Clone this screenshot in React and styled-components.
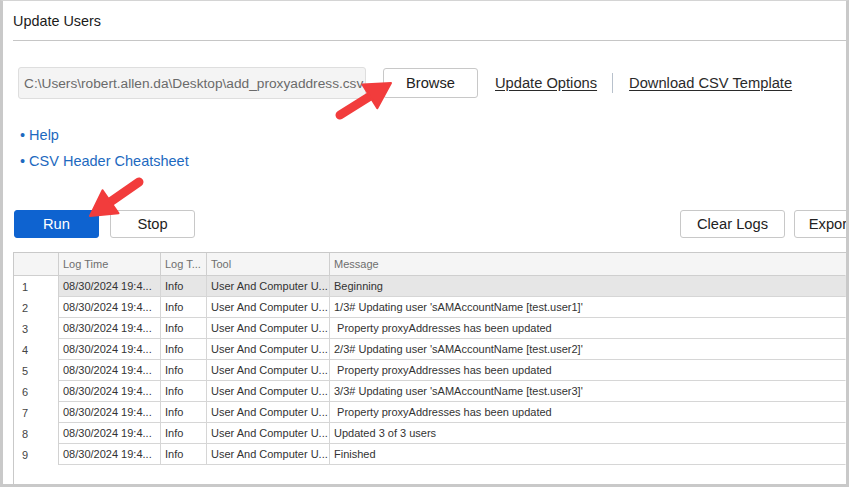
import React from "react";
import styled, { createGlobalStyle } from "styled-components";

const Global = createGlobalStyle`
  html, body { margin: 0; padding: 0; background: #fff; }
  body { font-family: "Liberation Sans", Arial, sans-serif; }
  * { box-sizing: border-box; }
`;

const Frame = styled.div`
  position: relative;
  width: 849px;
  height: 487px;
  border-left: 3px solid #c9c9c9;
  border-top: 1px solid #d4d4d4;
  border-right: 3px solid #c9c9c9;
  border-bottom: 3px solid #c9c9c9;
  padding-left: 10px;
  display: flex;
  flex-direction: column;
  overflow: hidden;
  background: #fff;
`;

const Title = styled.div`
  height: 40px;
  flex: none;
  display: flex;
  align-items: center;
  border-bottom: 1px solid #c6c6c6;
  font-size: 14.4px;
  color: #1a1a1a;
`;

const FileRow = styled.div`
  margin-top: 26px;
  padding-left: 5px;
  display: flex;
  align-items: center;
  flex: none;
`;

const PathBox = styled.div`
  width: 348px;
  height: 32px;
  background: #f4f4f4;
  border: 1px solid #dedede;
  border-radius: 3px;
  padding-left: 5px;
  display: flex;
  align-items: center;
  font-size: 13.7px;
  color: #6a6a6a;
  white-space: nowrap;
  overflow: hidden;
`;

const Button = styled.button`
  height: 28px;
  width: ${(p) => p.$w || 85}px;
  border-radius: 3px;
  border: 1px solid ${(p) => (p.$primary ? "#0e63d0" : "#c8c8c8")};
  background: ${(p) => (p.$primary ? "#0e63d0" : "#fff")};
  color: ${(p) => (p.$primary ? "#fff" : "#222")};
  font-family: "Liberation Sans", Arial, sans-serif;
  font-size: 14.7px;
  padding: 0;
  flex: none;
  cursor: pointer;
`;

const BrowseButton = styled(Button)`
  margin-left: 17px;
  height: 30px;
`;

const LinkText = styled.a`
  font-size: 14.7px;
  color: #2a2a2a;
  text-decoration: underline;
  text-underline-offset: 2px;
  margin-left: ${(p) => p.$ml || 0}px;
  cursor: pointer;
`;

const Divider = styled.span`
  width: 1px;
  height: 20px;
  background: #b8c1cc;
  margin-left: 15px;
`;

const HelpList = styled.div`
  margin-top: 23px;
  padding-left: 7px;
  display: flex;
  flex-direction: column;
  flex: none;
`;

const HelpItem = styled.a`
  line-height: 26px;
  font-size: 14.5px;
  color: #1d69c0;
  cursor: pointer;
`;

const ActionRow = styled.div`
  margin-top: 36px;
  margin-right: -20px;
  padding-left: 1px;
  display: flex;
  align-items: center;
  gap: 11px;
  flex: none;
`;

const RightGroup = styled.div`
  margin-left: auto;
  display: flex;
  gap: 9px;
`;

const Table = styled.div`
  margin-top: 14px;
  flex: 1;
  border-top: 1px solid #c9c9c9;
  border-left: 1px solid #c9c9c9;
  display: grid;
  grid-template-columns: 45px 102px 46px 123px 1fr;
  grid-auto-rows: 21px;
  grid-template-rows: 23px;
  align-content: start;
  font-size: 11px;
  color: #333;
`;

const HeadCell = styled.div`
  background: #f5f5f5;
  border-bottom: 1px solid #cfcfcf;
  border-right: 1px solid ${(p) => (p.$last ? "transparent" : "#cfcfcf")};
  color: #6e6e6e;
  display: flex;
  align-items: center;
  padding-left: 4px;
  white-space: nowrap;
  overflow: hidden;
`;

const NumCell = styled.div`
  border-right: 1px solid #d2d2d2;
  display: flex;
  align-items: center;
  padding-left: 8px;
  color: #444;
`;

const Cell = styled.div`
  background: ${(p) => (p.$sel ? "#e6e6e6" : "#fff")};
  border-bottom: 1px solid #d6d6d6;
  border-right: 1px solid ${(p) => (p.$last ? "transparent" : "#d6d6d6")};
  display: flex;
  align-items: center;
  padding-left: 4px;
  white-space: pre;
  overflow: hidden;
`;

const Overlay = styled.svg`
  position: absolute;
  left: -3px;
  top: -1px;
  width: 849px;
  height: 487px;
  pointer-events: none;
`;

const messages = [
  "Beginning",
  "1/3# Updating user 'sAMAccountName [test.user1]'",
  " Property proxyAddresses has been updated",
  "2/3# Updating user 'sAMAccountName [test.user2]'",
  " Property proxyAddresses has been updated",
  "3/3# Updating user 'sAMAccountName [test.user3]'",
  " Property proxyAddresses has been updated",
  "Updated 3 of 3 users",
  "Finished",
];

function Arrow({ tail, tip }) {
  const dx = tip[0] - tail[0];
  const dy = tip[1] - tail[1];
  const len = Math.hypot(dx, dy);
  const ux = dx / len;
  const uy = dy / len;
  const nx = -uy;
  const ny = ux;
  const hl = 25;
  const hw = 14;
  const bx = tip[0] - hl * ux;
  const by = tip[1] - hl * uy;
  const pts = [
    [tip[0], tip[1]],
    [bx + hw * nx, by + hw * ny],
    [bx - hw * nx, by - hw * ny],
  ]
    .map((p) => p.join(","))
    .join(" ");
  return (
    <g>
      <line
        x1={tail[0]}
        y1={tail[1]}
        x2={bx + 3 * ux}
        y2={by + 3 * uy}
        stroke="#f23c3c"
        strokeWidth="9"
        strokeLinecap="round"
      />
      <polygon points={pts} fill="#f23c3c" stroke="#f23c3c" strokeWidth="2" strokeLinejoin="round" />
    </g>
  );
}

export default function App() {
  return (
    <>
      <Global />
      <Frame>
        <Title>Update Users</Title>
        <FileRow>
          <PathBox>C:\Users\robert.allen.da\Desktop\add_proxyaddress.csv</PathBox>
          <BrowseButton $w={95}>Browse</BrowseButton>
          <LinkText $ml={17}>Update Options</LinkText>
          <Divider />
          <LinkText $ml={16}>Download CSV Template</LinkText>
        </FileRow>
        <HelpList>
          <HelpItem>• Help</HelpItem>
          <HelpItem>• CSV Header Cheatsheet</HelpItem>
        </HelpList>
        <ActionRow>
          <Button $primary>Run</Button>
          <Button>Stop</Button>
          <RightGroup>
            <Button $w={105}>Clear Logs</Button>
            <Button $w={72}>Export</Button>
          </RightGroup>
        </ActionRow>
        <Table>
          <HeadCell />
          <HeadCell>Log Time</HeadCell>
          <HeadCell>Log T...</HeadCell>
          <HeadCell>Tool</HeadCell>
          <HeadCell $last>Message</HeadCell>
          {messages.map((m, i) => (
            <React.Fragment key={i}>
              <NumCell>{i + 1}</NumCell>
              <Cell $sel={i === 0}>08/30/2024 19:4...</Cell>
              <Cell $sel={i === 0}>Info</Cell>
              <Cell $sel={i === 0}>User And Computer U...</Cell>
              <Cell $sel={i === 0} $last>{m}</Cell>
            </React.Fragment>
          ))}
        </Table>
        <Overlay viewBox="0 0 849 487">
          <Arrow tail={[340, 115]} tip={[391, 83]} />
          <Arrow tail={[139, 182]} tip={[90, 216]} />
        </Overlay>
      </Frame>
    </>
  );
}
